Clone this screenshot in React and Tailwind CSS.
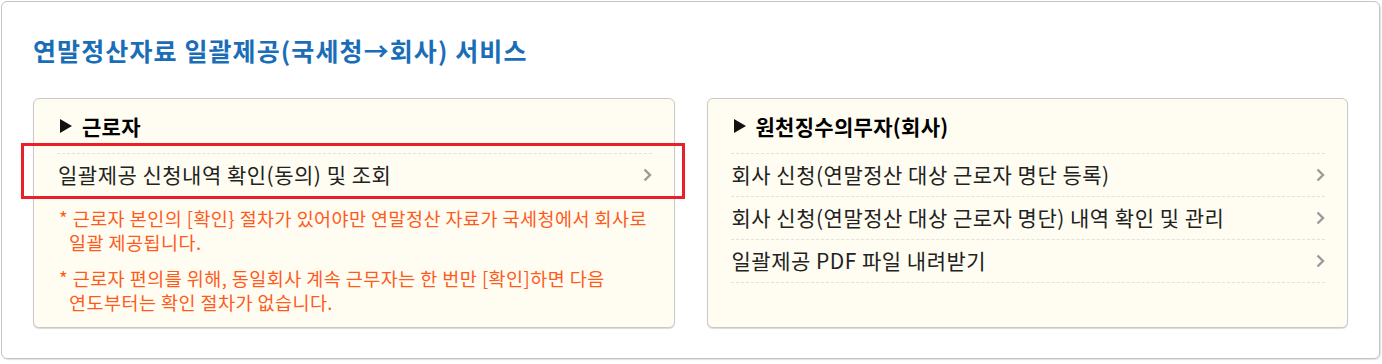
import React from "react";

const font = { fontFamily: '"Noto Sans CJK KR", "Noto Sans", sans-serif' };

const companyItems = [
  "회사 신청(연말정산 대상 근로자 명단 등록)",
  "회사 신청(연말정산 대상 근로자 명단) 내역 확인 및 관리",
  "일괄제공 PDF 파일 내려받기",
];

const notes = [
  ["* 근로자 본인의 [확인} 절차가 있어야만 연말정산 자료가 국세청에서 회사로", "일괄 제공됩니다."],
  ["* 근로자 편의를 위해, 동일회사 계속 근무자는 한 번만 [확인]하면 다음", "연도부터는 확인 절차가 없습니다."],
];

function Chevron() {
  return (
    <svg width="9" height="14" viewBox="0 0 9 14" className="shrink-0">
      <polyline points="1.5,1.5 7,7 1.5,12.5" fill="none" stroke="#9a9a9a" strokeWidth="2.4" />
    </svg>
  );
}

function Heading({ children }) {
  return (
    <div className="flex items-center gap-[10px] pl-[3px] h-[28px] text-[21px] font-bold text-black leading-[28px] tracking-[0.3px]">
      <svg width="12" height="14" viewBox="0 0 12 14">
        <polygon points="0,0 12,7 0,14" fill="#111" />
      </svg>
      <span>{children}</span>
    </div>
  );
}

function Row({ children, highlight }) {
  return (
    <li className="relative flex items-center justify-between h-[43px] border-b border-dashed border-[#e2e2dc] text-[21px] tracking-[0.5px] text-[#222] pl-px">
      <span>{children}</span>
      <Chevron />
      {highlight && (
        <div className="absolute top-[-11px] bottom-[-3px] left-[-36px] right-[-33px] border-[3px] border-[#e8202a] pointer-events-none" />
      )}
    </li>
  );
}

export default function App() {
  return (
    <div className="bg-white w-[1382px] h-[364px] p-px pr-[2px]" style={font}>
      <div className="rounded-[6px] border border-[#c4c4c4] shadow-[1px_1px_1px_rgba(0,0,0,0.12)] px-[31px] pt-[31px] pb-[30px]">
        <h1 className="text-[25px] font-bold text-[#1a6db7] leading-[34px] tracking-[1.1px]">
          연말정산자료 일괄제공(국세청→회사) 서비스
        </h1>

        <div className="grid grid-cols-2 gap-[32px] mt-[31px]">
          {/* 근로자 */}
          <div className="rounded-[6px] border border-[#c9c9c9] bg-[#fffdf1] shadow-[0_1px_1px_rgba(0,0,0,0.15)] pl-[23px] pr-[22px] pt-[13px] pb-[13px]">
            <Heading>근로자</Heading>
            <ul className="mt-[13px] border-t border-dashed border-[#e2e2dc]">
              <Row highlight>일괄제공 신청내역 확인(동의) 및 조회</Row>
            </ul>
            <div className="mt-[9px] flex flex-col gap-[12px] text-[18.5px] leading-[24px] text-[#ff5a1e] tracking-[0.45px]">
              {notes.map((n) => (
                <p key={n[0]} className="pl-[2px]">
                  {n[0]}
                  <br />
                  <span className="pl-[10px]">{n[1]}</span>
                </p>
              ))}
            </div>
          </div>

          {/* 원천징수의무자 */}
          <div className="rounded-[6px] border border-[#c9c9c9] bg-[#fffdf1] shadow-[0_1px_1px_rgba(0,0,0,0.15)] pl-[23px] pr-[22px] pt-[13px] pb-[13px]">
            <Heading>원천징수의무자(회사)</Heading>
            <ul className="mt-[13px] border-t border-dashed border-[#e2e2dc]">
              {companyItems.map((t) => (
                <Row key={t}>{t}</Row>
              ))}
            </ul>
          </div>
        </div>
      </div>
    </div>
  );
}
